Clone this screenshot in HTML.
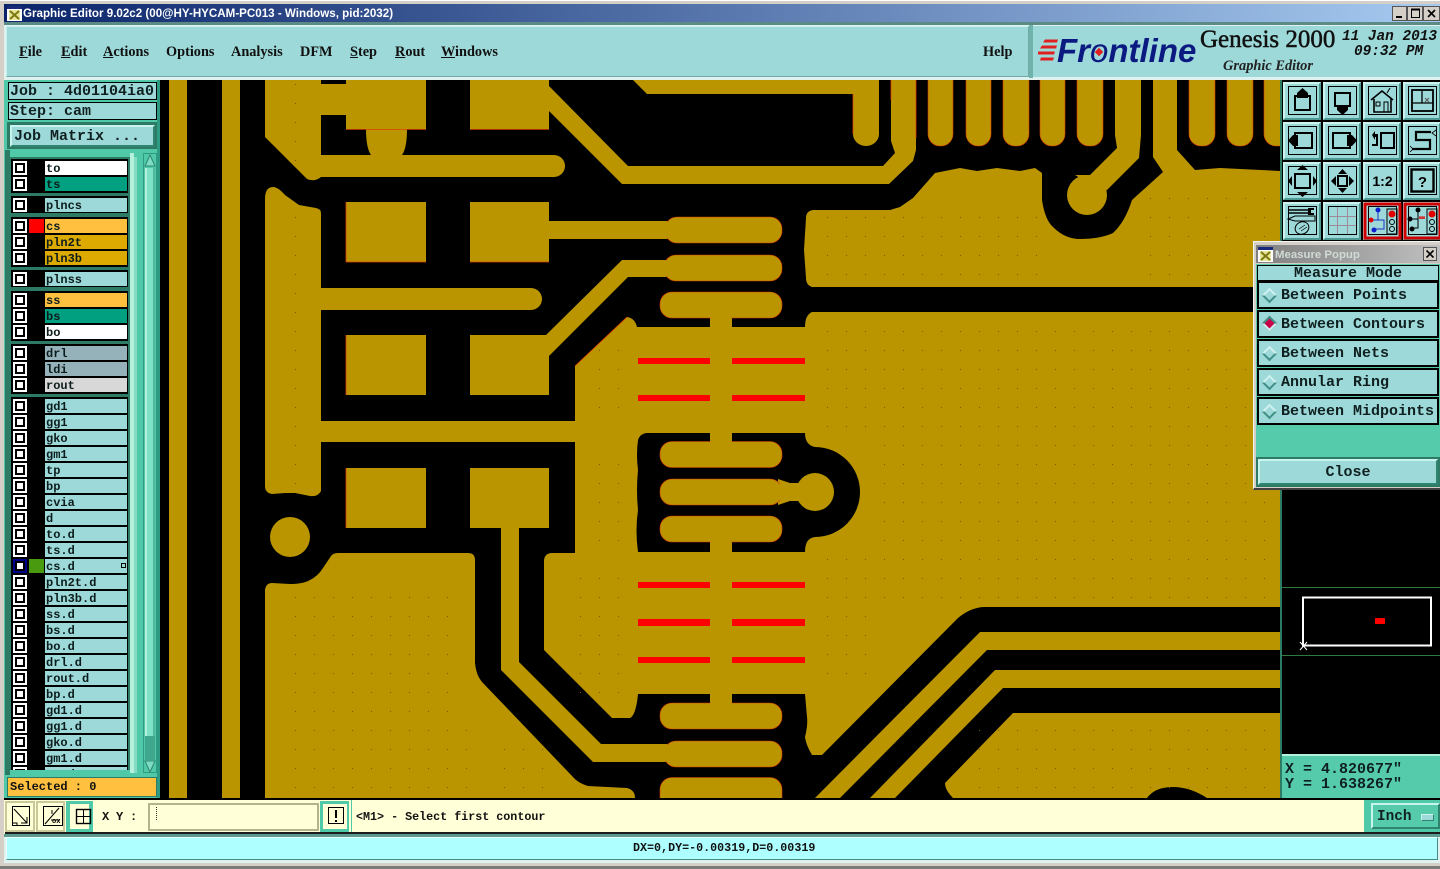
<!DOCTYPE html>
<html><head><meta charset="utf-8"><title>Graphic Editor</title>
<style>
html,body{margin:0;padding:0;background:#d4d0c8;overflow:hidden}
body{position:relative;width:1440px;height:869px;overflow:hidden;font-family:"Liberation Mono",monospace;font-weight:bold;color:#111}
div,span.a{position:absolute;box-sizing:border-box}
.t{white-space:pre}
.m{font:bold 14.3px/1 "Liberation Serif",serif;position:absolute;top:45px;color:#111;white-space:pre}
.g{position:absolute;left:11px;width:117px;background:#000;overflow:hidden}
.r{position:absolute;left:0;width:116px;height:16px}
.r i{position:absolute;left:2px;top:1px;width:14px;height:14px;background:#fff}
.r i:after{content:"";position:absolute;left:2px;top:2px;width:10px;height:10px;border:2px solid #000;background:#fff;box-sizing:border-box}
.r b{position:absolute;left:34px;top:1px;width:81px;height:14px;overflow:hidden;background:#9dd9d9;font:bold 12px/16px "Liberation Mono",monospace;padding-left:1px;white-space:pre;color:#0c1c1c}
.bev{border:2px solid;border-color:#c8f4ee #2f8470 #2f8470 #c8f4ee}
.row{position:absolute;left:1257px;width:182px;background:#9dd9d9;border:2px solid #000;font:bold 15px/26px "Liberation Mono",monospace;padding-left:22px;white-space:pre;color:#102020;overflow:hidden}
.dm{position:absolute;left:1264px;width:11px;height:11px;transform:rotate(45deg);border:2px solid;border-color:#d0f0f0 #3f8f85 #3f8f85 #d0f0f0;background:#9dd9d9}
</style></head><body>

<!-- window frame and title -->
<div style="left:0;top:0;width:1440px;height:869px;background:#d4d0c8"></div>
<div style="left:0;top:0;width:1440px;height:1px;background:#fff"></div>
<div style="left:4px;top:4px;width:1436px;height:18px;background:linear-gradient(90deg,#0a246a,#a6caf0)"></div>
<svg style="position:absolute;left:7px;top:6px" width="15" height="15" viewBox="0 0 15 15"><rect width="15" height="15" fill="#fff"/><rect width="15" height="3" fill="#1a2a7a"/><rect x="2" y="4" width="11" height="10" fill="#e8e49a"/><path d="M3 5L12 13M12 5L3 13" stroke="#7a7a10" stroke-width="2"/></svg>
<div class="t" style="left:23px;top:7px;font:bold 11.6px/14px 'Liberation Sans',sans-serif;color:#fff">Graphic Editor 9.02c2 (00@HY-HYCAM-PC013 - Windows, pid:2032)</div>
<svg style="position:absolute;left:1392px;top:6px" width="48" height="15" viewBox="0 0 48 15">
<g fill="#d4d0c8" stroke="#555" stroke-width="1"><rect x=".5" y=".5" width="14" height="14"/><rect x="15.5" y=".5" width="15" height="14"/><rect x="31.5" y=".5" width="16" height="14"/></g>
<path d="M4 11H10" stroke="#000" stroke-width="2"/><rect x="19.5" y="3.5" width="8" height="8" fill="none" stroke="#000"/><path d="M19 3.5H28" stroke="#000" stroke-width="2"/><path d="M36 4L43 11M43 4L36 11" stroke="#000" stroke-width="1.6"/></svg>

<!-- top bars -->
<div style="left:4px;top:22px;width:1436px;height:3px;background:#5c8a84"></div>
<div style="left:4px;top:25px;width:1436px;height:55px;background:#dff2f0"></div>
<div style="left:6px;top:26px;width:1023px;height:51px;background:#9dd9d9;border:1px solid;border-color:#c9efec #6fa9a8 #6fa9a8 #c9efec"></div>
<div style="left:1029px;top:25px;width:4px;height:53px;background:#6fb3ab"></div>
<div style="left:1033px;top:26px;width:407px;height:51px;background:#9dd9d9"></div>

<span class="m" style="left:19px"><u>F</u>ile</span>
<span class="m" style="left:61px"><u>E</u>dit</span>
<span class="m" style="left:103px"><u>A</u>ctions</span>
<span class="m" style="left:166px">Options</span>
<span class="m" style="left:231px">Analysis</span>
<span class="m" style="left:300px">DFM</span>
<span class="m" style="left:350px"><u>S</u>tep</span>
<span class="m" style="left:395px"><u>R</u>out</span>
<span class="m" style="left:441px"><u>W</u>indows</span>
<span class="m" style="left:983px">Help</span>

<!-- logo -->
<svg style="position:absolute;left:1036px;top:38px" width="24" height="26" viewBox="0 0 24 26"><path d="M9 1.500H22L21 4.500H7ZM6 7.500H21L20 10.500H4ZM2 13.500H19L18 16.500H2ZM5 19.500H18L17 22.500H4Z" fill="#e02020"/></svg>
<div class="t" style="left:1057px;top:33px;font:italic bold 33px/36px 'Liberation Sans',sans-serif;color:#0a1a80">Fr<span style="font-weight:normal">o</span>ntline</div>
<div style="left:1096px;top:49px;width:6px;height:6px;background:#e02020;transform:rotate(45deg)"></div>
<div class="t" style="left:1200px;top:26px;font:normal 25px/28px 'Liberation Serif',serif;-webkit-text-stroke:.5px #111;color:#111">Genesis 2000</div>
<div class="t" style="left:1223px;top:58px;font:italic bold 14.4px/17px 'Liberation Serif',serif;color:#222">Graphic Editor</div>
<div class="t" style="left:1342px;top:29px;font:italic bold 14.4px/16px 'Liberation Mono',monospace;color:#111">11 Jan 2013</div>
<div class="t" style="left:1354px;top:44px;font:italic bold 14.4px/16px 'Liberation Mono',monospace;color:#111">09:32 PM</div>

<!-- main canvas -->
<div style="left:160px;top:80px;width:1121px;height:718px;background:#000"></div>
<svg style="position:absolute;left:169px;top:80px" width="1111" height="718" viewBox="169 80 1111 718">
<defs><pattern id="d" patternUnits="userSpaceOnUse" x="827" y="236" width="19" height="19"><rect width="1" height="1" fill="#7c5c00"/></pattern></defs>
<g fill="#bb9500">
<rect x="169" y="80" width="18" height="718"/><rect x="222" y="80" width="18" height="718"/>
<!-- top-left block -->
<path d="M265 80H321V84H346V80H426V129H407Q407 148 402 155H554A11 11 0 0 1 554 177H321Q316 181 311 180Q308 180 306 178L265 137Z"/>
<!-- left block -->
<path d="M265 199Q265 187 273 187Q278 187 285 195L299 205L316 208Q321 209 321 213V288H531A11 11 0 0 1 531 310H321V491Q318 497 310 496L295 493H285L272 494Q265 493 265 486Z"/>
<circle cx="290" cy="537" r="20"/>
<!-- pads -->
<rect x="470" y="80" width="79" height="49"/>
<rect x="346" y="202" width="80" height="60"/><rect x="470" y="202" width="79" height="60"/>
<rect x="346" y="335" width="80" height="60"/><rect x="470" y="335" width="79" height="60"/>
<rect x="346" y="468" width="80" height="60"/><rect x="470" y="468" width="79" height="60"/>
<!-- main central -->
<path d="M627 317Q635 318 637 327H710V318H732V327H805Q805 315 812 312H1280V607H983Q970 608 958 618L822 755H812Q806 745 805 737Q808 725 807 717L805 694H732V703H710V694H638Q636 715 630 718H612L544 650V560Q545 553 552 553H575V442H321V421H575V366Z"/>
<!-- upper right -->
<path d="M813 210H890L900 207L913 198L935 173L960 168L977 171L997 168L1020 171L1035 168L1042 173V200Q1045 220 1053 227Q1065 239 1080 239Q1100 239 1113 233Q1125 222 1132 200L1163 172L1153 157V80H1177V150L1195 170L1220 168L1280 171V287H812Q806 285 806 278L804 250L806 218Q806 211 813 210Z"/>
</g>
<!-- comb black -->
<path d="M646 433H805Q805 445 815 447A45 45 0 0 1 815 537Q805 538 805 552H638Q635 530 638 510Q636 490 638 470Q636 455 638 440Q640 434 646 433Z" fill="#000"/>
<!-- hole in top-left -->
<path d="M321 115H346V129H366Q366 148 371 155H321Z" fill="#000"/>
<g fill="#bb9500">
<rect x="710" y="433" width="22" height="12"/><rect x="710" y="540" width="22" height="12"/>
<!-- traces -->
<rect x="549" y="221" width="125" height="18"/>
<path d="M622 260H675V277H628L549 356V335H546Z"/>
<path d="M501 528V670L593 762H675V744H601L519 662V528Z"/>
<path d="M633 80L647 94H853V134A13 12 0 0 0 879 134V80Z"/>
<path d="M891 80H916V150L913 161L889 184H622L549 111V86L628 166H883L895 153L891 141Z"/>
<path d="M1115 80V135L1117 148L1090 175H1075L1100 190H1107L1139 158L1141 135V80Z"/>
<circle cx="1087" cy="195" r="20"/>
<path d="M778 479L790 483H802V501H790L778 505Z"/><circle cx="815" cy="492" r="19"/>
<!-- lower-left -->
<path d="M265 590Q266 583 272 583L290 584Q303 584 310 580Q318 576 323 568L331 556Q333 553 338 553H468Q475 553 475 560V663Q476 675 482 682L573 777Q578 783 588 786L627 788Q635 790 635 798H265Z"/>
<!-- diagonals -->
<path d="M815 798L980 632H1280V650H987L840 798Z"/>
<path d="M870 798L995 670H1280V688H1003L895 798Z"/>
<path d="M1013 713H1280V798H1207Q1190 787 1173 787Q1155 787 1147 798H953Q945 790 945 783Z"/>
</g>
<!-- rounded pads with red edge -->
<g fill="#bb9500" stroke="#d83c00" stroke-width=".6">
<rect x="665" y="217" width="117" height="26" rx="12"/><rect x="664" y="255" width="118" height="26" rx="12"/><rect x="660" y="292" width="122" height="26" rx="12"/>
<rect x="660" y="441.500" width="122" height="26" rx="12"/><rect x="660" y="479" width="122" height="26" rx="12"/><rect x="660" y="516" width="122" height="26" rx="12"/>
<rect x="660" y="703" width="122" height="26" rx="12"/><rect x="664" y="741" width="118" height="26" rx="12"/><rect x="660" y="777.500" width="122" height="40" rx="12"/>
</g>
<g fill="#bb9500"><rect x="711" y="316" width="20" height="6"/><rect x="711" y="439" width="20" height="6"/><rect x="711" y="539" width="20" height="6"/><rect x="711" y="700" width="20" height="6"/><rect x="655" y="222" width="20" height="16"/><rect x="655" y="261" width="20" height="15"/><rect x="655" y="745" width="20" height="16"/><rect x="775" y="484" width="12" height="16"/></g>
<!-- fingers -->
<g fill="#bb9500" stroke="#d83c00" stroke-width=".6">
<rect x="928" y="50" width="25" height="96" rx="12"/><rect x="966" y="50" width="25" height="96" rx="12"/><rect x="1003" y="50" width="26" height="96" rx="12"/><rect x="1040" y="50" width="25" height="96" rx="12"/><rect x="1077" y="50" width="26" height="96" rx="12"/><rect x="1189" y="50" width="26" height="96" rx="12"/><rect x="1227" y="50" width="26" height="96" rx="12"/><rect x="1264" y="50" width="40" height="96" rx="12"/>
</g>
<!-- red bars -->
<g fill="#ff0000">
<rect x="638" y="358" width="72" height="6"/><rect x="732" y="358" width="73" height="6"/>
<rect x="638" y="395" width="72" height="6"/><rect x="732" y="395" width="73" height="6"/>
<rect x="638" y="582" width="72" height="6"/><rect x="732" y="582" width="73" height="6"/>
<rect x="638" y="619" width="72" height="7"/><rect x="732" y="619" width="73" height="7"/>
<rect x="638" y="657" width="72" height="6"/><rect x="732" y="657" width="73" height="6"/>
</g>
<!-- red thin edges -->
<path d="M346 129.500H426M470 129.500H549M346 262H426M470 262H549M346 202V262M346 335V395M346 468V528M853 94V134M916 80V138M891 80V100M575 366L627 317" stroke="#e04000" stroke-width=".8" fill="none"/>
<!-- dots -->
<g fill="url(#d)">
<rect x="290" y="80" width="10" height="90"/><rect x="290" y="215" width="10" height="270"/>
<rect x="290" y="595" width="165" height="195"/><rect x="455" y="720" width="30" height="70"/><rect x="500" y="745" width="60" height="45"/>
<rect x="585" y="335" width="50" height="90"/><rect x="585" y="450" width="50" height="100"/><rect x="575" y="560" width="60" height="140"/>
<rect x="820" y="320" width="460" height="110"/><rect x="870" y="440" width="410" height="160"/><rect x="820" y="555" width="60" height="135"/>
<rect x="820" y="217" width="220" height="68"/><rect x="1135" y="180" width="145" height="105"/><rect x="970" y="725" width="310" height="65"/>
</g>
</svg>

<!-- left panel -->
<div style="left:4px;top:80px;width:156px;height:718px;background:#4fc9a8"></div>
<div style="left:5px;top:150px;width:5px;height:625px;background:#2e7b65"></div>
<div style="left:157px;top:80px;width:3px;height:718px;background:#2f9a82"></div>
<div class="t" style="left:8px;top:82px;width:149px;height:18px;background:#9dd9d9;border:1px solid #000;font:bold 15px/18px 'Liberation Mono',monospace;padding-left:1px;color:#102020">Job : 4d01104ia0</div>
<div class="t" style="left:8px;top:102px;width:149px;height:18px;background:#9dd9d9;border:1px solid #000;font:bold 15px/17px 'Liberation Mono',monospace;padding-left:1px;color:#102020">Step: cam</div>
<div style="left:7px;top:122px;width:150px;height:27px;background:#2e7b65"></div>
<div class="t bev" style="left:10px;top:125px;width:145px;height:22px;background:#9dd9d9;font:bold 15px/20px 'Liberation Mono',monospace;padding-left:2px;color:#102020">Job Matrix ...</div>

<!-- scroll -->
<div style="left:130px;top:153px;width:4px;height:620px;background:#b4f0dc"></div>
<div style="left:134px;top:157px;width:3px;height:616px;background:#85dcc4"></div>
<div style="left:143px;top:153px;width:14px;height:620px;background:#4fc9a8;border:1px solid #2f9a82"></div>
<div style="left:145px;top:168px;width:10px;height:568px;background:#7fe0c8;border-left:2px solid #b4f0dc;border-right:2px solid #4fb89c"></div>
<div style="left:145px;top:736px;width:10px;height:24px;background:#3fa78e"></div>
<svg style="position:absolute;left:144px;top:154px" width="12" height="13" viewBox="0 0 12 13"><path d="M6 1L11 12H1Z" fill="#7fdcc4" stroke="#2f8470"/></svg>
<svg style="position:absolute;left:144px;top:760px" width="12" height="13" viewBox="0 0 12 13"><path d="M6 12L11 1H1Z" fill="#7fdcc4" stroke="#2f8470"/></svg>

<!-- layer list -->
<div style="left:10px;top:157px;width:120px;height:613px;background:#2e7b65;overflow:hidden;margin:0">
<div style="left:-10px;top:-157px;width:130px;height:770px">
<div class="g" style="top:159px;height:34px">
 <div class="r" style="top:1px"><i></i><b style="background:#fff">to</b></div>
 <div class="r" style="top:17px"><i></i><b style="background:#00a080">ts</b></div></div>
<div class="g" style="top:196px;height:17px">
 <div class="r" style="top:1px"><i></i><b>plncs</b></div></div>
<div class="g" style="top:217px;height:50px">
 <div style="left:18px;top:2px;width:15px;height:14px;background:#f00"></div>
 <div class="r" style="top:1px"><i></i><b style="background:#ffc040">cs</b></div>
 <div class="r" style="top:17px"><i></i><b style="background:#dcaa00">pln2t</b></div>
 <div class="r" style="top:33px"><i></i><b style="background:#dcaa00">pln3b</b></div></div>
<div class="g" style="top:270px;height:17px">
 <div class="r" style="top:1px"><i></i><b>plnss</b></div></div>
<div class="g" style="top:291px;height:50px">
 <div class="r" style="top:1px"><i></i><b style="background:#ffc040">ss</b></div>
 <div class="r" style="top:17px"><i></i><b style="background:#00a080">bs</b></div>
 <div class="r" style="top:33px"><i></i><b style="background:#fff">bo</b></div></div>
<div class="g" style="top:344px;height:50px">
 <div class="r" style="top:1px"><i></i><b style="background:#95b2ba">drl</b></div>
 <div class="r" style="top:17px"><i></i><b style="background:#95b2ba">ldi</b></div>
 <div class="r" style="top:33px"><i></i><b style="background:#d8d8d8">rout</b></div></div>
<div class="g" style="top:397px;height:373px">
 <div class="r" style="top:1px"><i></i><b>gd1</b></div>
 <div class="r" style="top:17px"><i></i><b>gg1</b></div>
 <div class="r" style="top:33px"><i></i><b>gko</b></div>
 <div class="r" style="top:49px"><i></i><b>gm1</b></div>
 <div class="r" style="top:65px"><i></i><b>tp</b></div>
 <div class="r" style="top:81px"><i></i><b>bp</b></div>
 <div class="r" style="top:97px"><i></i><b>cvia</b></div>
 <div class="r" style="top:113px"><i></i><b>d</b></div>
 <div class="r" style="top:129px"><i></i><b>to.d</b></div>
 <div class="r" style="top:145px"><i></i><b>ts.d</b></div>
 <div style="left:18px;top:162px;width:15px;height:14px;background:#4a9a10"></div>
 <div class="r" style="top:161px"><i style="outline:2px solid #00008a;outline-offset:-2px"></i><b>cs.d</b></div>
 <div style="left:110px;top:166px;width:5px;height:5px;border:1px solid #000;background:#9dd9d9"></div>
 <div class="r" style="top:177px"><i></i><b>pln2t.d</b></div>
 <div class="r" style="top:193px"><i></i><b>pln3b.d</b></div>
 <div class="r" style="top:209px"><i></i><b>ss.d</b></div>
 <div class="r" style="top:225px"><i></i><b>bs.d</b></div>
 <div class="r" style="top:241px"><i></i><b>bo.d</b></div>
 <div class="r" style="top:257px"><i></i><b>drl.d</b></div>
 <div class="r" style="top:273px"><i></i><b>rout.d</b></div>
 <div class="r" style="top:289px"><i></i><b>bp.d</b></div>
 <div class="r" style="top:305px"><i></i><b>gd1.d</b></div>
 <div class="r" style="top:321px"><i></i><b>gg1.d</b></div>
 <div class="r" style="top:337px"><i></i><b>gko.d</b></div>
 <div class="r" style="top:353px"><i></i><b>gm1.d</b></div>
 <div class="r" style="top:369px;height:4px;overflow:hidden"><i></i><b>tp.d</b></div>
</div>
</div></div>

<div class="t" style="left:7px;top:777px;width:150px;height:20px;background:#ffc040;border:1px solid #2e7b65;font:bold 12px/18px 'Liberation Mono',monospace;padding-left:2px;color:#111">Selected : 0</div>

<!-- right column -->
<div style="left:1280px;top:80px;width:160px;height:718px;background:#000"></div>
<div style="left:1280px;top:80px;width:2px;height:718px;background:#2e7b65"></div>
<svg style="position:absolute;left:1282px;top:80px" width="158" height="160" viewBox="1282 80 158 160">
<defs>
<g id="b"><rect width="38" height="38" fill="#9dd9d9"/><path d="M0 38V0H38L36 2H2V36Z" fill="#cdf3ef"/><path d="M38 0V38H0L2 36H36V2Z" fill="#4e9a92"/><rect x="5.500" y="4.500" width="28" height="28" fill="none" stroke="#000"/></g>
</defs>
<!-- row 1 -->
<g transform="translate(1283,82)"><use href="#b"/><rect x="12" y="14" width="15" height="14" fill="none" stroke="#000" stroke-width="2"/><path d="M19.500 6L25 11V16H14V11Z" fill="#000"/></g>
<g transform="translate(1323,82)"><use href="#b"/><path d="M12 11H27V24H12Z" fill="none" stroke="#000" stroke-width="2"/><path d="M14 23H25V28L19.500 33L14 28Z" fill="#000"/></g>
<g transform="translate(1363,82)"><use href="#b"/><path d="M8 18L19 9L30 18M11 17V30H28V17" fill="none" stroke="#000" stroke-width="1.600"/><rect x="21" y="20" width="4" height="10" fill="none" stroke="#000"/><rect x="13" y="20" width="4" height="4" fill="none" stroke="#000"/><path d="M24 11L27 6" stroke="#000"/></g>
<g transform="translate(1403,82)"><use href="#b"/><rect x="9" y="8" width="21" height="21" fill="none" stroke="#000" stroke-width="1.800"/><path d="M19 8V21M9 21H30" stroke="#000" stroke-width="1.300"/><path d="M22 16L26 20M26 16L22 20" stroke="#555"/></g>
<!-- row 2 -->
<g transform="translate(1283,122)"><use href="#b"/><rect x="12" y="11" width="17" height="15" fill="none" stroke="#000" stroke-width="2"/><path d="M5 18.500L10 13H15V24H10Z" fill="#000"/></g>
<g transform="translate(1323,122)"><use href="#b"/><rect x="10" y="11" width="17" height="15" fill="none" stroke="#000" stroke-width="2"/><path d="M34 18.500L29 13H24V24H29Z" fill="#000"/></g>
<g transform="translate(1363,122)"><use href="#b"/><rect x="18" y="11" width="13" height="15" fill="none" stroke="#000" stroke-width="2"/><path d="M9 13L12 9V12H15V24H9V22H13V15H12V18Z" fill="#000"/></g>
<g transform="translate(1403,122)"><use href="#b"/><path d="M28 10H13V18H27V27H9" fill="none" stroke="#000" stroke-width="2.200"/><path d="M33 8L29 11L33 14M7 24L10 27L7 30" fill="none" stroke="#000" stroke-width=".8"/></g>
<!-- row 3 -->
<g transform="translate(1283,162)"><use href="#b"/><rect x="12" y="12" width="15" height="14" fill="none" stroke="#000" stroke-width="2"/><path d="M19.500 3L25 8H14ZM19.500 35L25 30H14ZM5 19L9 14V24ZM34 19L30 14V24Z" fill="#000"/></g>
<g transform="translate(1323,162)"><use href="#b"/><rect x="15" y="14" width="9" height="10" fill="none" stroke="#000" stroke-width="2"/><path d="M19.500 7L24 12H15ZM19.500 31L24 26H15ZM8 19L13 14V24ZM31 19L26 14V24Z" fill="#000"/></g>
<g transform="translate(1363,162)"><use href="#b"/><text x="19.500" y="24" text-anchor="middle" font-family="Liberation Sans" font-weight="bold" font-size="14" fill="#000">1:2</text></g>
<g transform="translate(1403,162)"><use href="#b"/><rect x="8.500" y="7.500" width="22" height="22" fill="none" stroke="#000" stroke-width="2.400"/><text x="19.500" y="25" text-anchor="middle" font-family="Liberation Sans" font-weight="bold" font-size="15" fill="#000">?</text></g>
<!-- row 4 -->
<g transform="translate(1283,202)"><use href="#b"/><path d="M5 8H25M5 11H25" stroke="#000" stroke-width="1.500"/><path d="M25 6H31V8H28V11H31V13H25Z" fill="#000"/><path d="M5 17L12 14H32V19H12Z" fill="none" stroke="#000"/><ellipse cx="19" cy="26" rx="7" ry="6" fill="none" stroke="#000" transform="rotate(-25 19 26)"/><path d="M16 27L22 23M18 29L24 25" stroke="#000" stroke-width=".7"/></g>
<g transform="translate(1323,202)"><use href="#b"/><path d="M14.500 5V32M24.500 5V32M6 14.500H33M6 23.500H33" stroke="#a08a9a" stroke-width="1"/></g>
<g transform="translate(1363,202)"><use href="#b"/><rect x="2" y="2" width="35" height="34" fill="none" stroke="#d00000" stroke-width="3"/><rect x="24" y="7" width="10" height="25" fill="none" stroke="#000"/><circle cx="29" cy="12" r="3.500" fill="#e00000"/><circle cx="29" cy="20" r="2.500" fill="none" stroke="#000"/><circle cx="29" cy="27" r="2.500" fill="none" stroke="#000"/><path d="M15 8V18H8M15 18H21V27H12" fill="none" stroke="#2030c0"/><circle cx="15" cy="8" r="2.500" fill="#1020d0"/><circle cx="11" cy="28" r="2.500" fill="#1020d0"/><circle cx="8" cy="18" r="2.500" fill="#e00000"/></g>
<g transform="translate(1403,202)"><use href="#b"/><rect x="2" y="2" width="35" height="34" fill="none" stroke="#d00000" stroke-width="3"/><rect x="24" y="7" width="10" height="25" fill="none" stroke="#000"/><circle cx="29" cy="12" r="3.500" fill="#e00000"/><circle cx="29" cy="20" r="2.500" fill="none" stroke="#000"/><circle cx="29" cy="27" r="2.500" fill="none" stroke="#000"/><path d="M15 8V26H10M15 17H8" fill="none" stroke="#000"/><circle cx="15" cy="8" r="2.500" fill="#000"/><circle cx="9" cy="27" r="2.500" fill="#000"/><circle cx="7" cy="17" r="2.500" fill="#000"/><path d="M16 16H22M17 14V17M19 14V17M21 14V17" stroke="#e00000"/></g>
</svg>

<!-- thumbnail -->
<svg style="position:absolute;left:1282px;top:580px" width="158" height="80" viewBox="1282 580 158 80">
<path d="M1282 587.500H1440M1282 655.500H1440" stroke="#2e7a3a" stroke-width="1"/>
<rect x="1303" y="597.500" width="128" height="48" fill="none" stroke="#fff" stroke-width="2"/>
<rect x="1375" y="618" width="10" height="6" fill="#f00"/>
<path d="M1300 642L1307 650M1307 642L1300 650" stroke="#fff"/>
</svg>

<!-- coords -->
<div style="left:1282px;top:754px;width:158px;height:44px;background:#55cbac;border-top:2px solid #b4f0dc"></div>
<div class="t" style="left:1285px;top:762px;font:bold 15px/15px 'Liberation Mono',monospace;color:#102020">X = 4.820677"</div>
<div class="t" style="left:1285px;top:777px;font:bold 15px/15px 'Liberation Mono',monospace;color:#102020">Y = 1.638267"</div>

<!-- measure popup -->
<div style="left:1253px;top:241px;width:187px;height:249px;background:#d4d0c8;border:1px solid #f4f4f0;border-right:0;border-bottom:2px solid #404040"></div>
<div style="left:1256px;top:245px;width:184px;height:18px;background:linear-gradient(90deg,#808080,#c0c0c0)"></div>
<svg style="position:absolute;left:1258px;top:247px" width="15" height="15" viewBox="0 0 15 15"><rect width="15" height="15" fill="#fff"/><rect width="15" height="3" fill="#1a2a7a"/><rect x="2" y="4" width="11" height="10" fill="#e8e49a"/><path d="M3 5L12 13M12 5L3 13" stroke="#7a7a10" stroke-width="2"/></svg>
<div class="t" style="left:1275px;top:248px;font:bold 11.4px/14px 'Liberation Sans',sans-serif;color:#cfdcd4">Measure Popup</div>
<svg style="position:absolute;left:1423px;top:247px" width="14" height="14" viewBox="0 0 14 14"><rect x=".5" y=".5" width="13" height="13" fill="#d4d0c8" stroke="#555"/><path d="M3.500 3.500L10.500 10.500M10.500 3.500L3.500 10.500" stroke="#000" stroke-width="1.600"/></svg>
<div style="left:1256px;top:264px;width:184px;height:223px;background:#55cbac"></div>
<div class="t" style="left:1257px;top:265px;width:182px;height:16px;background:#9dd9d9;border:1px solid #000;font:bold 15px/16px 'Liberation Mono',monospace;text-align:center;color:#102020;overflow:hidden">Measure Mode</div>
<div class="row" style="top:281px;height:28px">Between Points</div>
<div class="row" style="top:310px;height:28px">Between Contours</div>
<div class="row" style="top:339px;height:28px">Between Nets</div>
<div class="row" style="top:368px;height:28px">Annular Ring</div>
<div class="row" style="top:397px;height:28px">Between Midpoints</div>
<div class="dm" style="top:290px"></div>
<div class="dm" style="top:318px;background:#c8004a;border-color:#3f8f85 #d0f0f0 #d0f0f0 #3f8f85"></div>
<div class="dm" style="top:348px"></div>
<div class="dm" style="top:377px"></div>
<div class="dm" style="top:406px"></div>
<div style="left:1256px;top:457px;width:184px;height:30px;background:#2e7b65"></div>
<div class="t bev" style="left:1258px;top:459px;width:180px;height:26px;background:#9dd9d9;font:bold 15px/24px 'Liberation Mono',monospace;text-align:center;color:#102020">Close</div>

<!-- bottom bar -->
<div style="left:4px;top:798px;width:1436px;height:2px;background:#000"></div>
<div style="left:4px;top:800px;width:1436px;height:34px;background:#ffffd8"></div>
<div style="left:5px;top:832px;width:1435px;height:2px;background:#1c1c1c"></div>
<div style="left:5px;top:801px;width:30px;height:31px;background:#ffffd8;border:2px solid #c8c89a"></div>
<div style="left:36px;top:801px;width:29px;height:31px;background:#ffffd8;border:2px solid #c8c89a"></div>
<div style="left:66px;top:801px;width:27px;height:31px;background:#4fc9a8"></div>
<div style="left:70px;top:804px;width:19px;height:25px;background:#ffffd8"></div>
<svg style="position:absolute;left:5px;top:801px" width="90" height="31" viewBox="5 801 90 31">
<rect x="12.500" y="806.500" width="17" height="19" fill="none" stroke="#000"/><path d="M14 809L27 823M27 817V823H21" fill="none" stroke="#000"/><path d="M12 823H17V826" stroke="#000" fill="none"/>
<rect x="43.500" y="806.500" width="19" height="19" fill="none" stroke="#000"/><path d="M45 824L59 808" stroke="#000"/><path d="M51 820H60M52 810V814" stroke="#000"/><text x="52" y="823" font-size="7" font-family="Liberation Mono" fill="#000">ox</text>
<rect x="77.500" y="809.500" width="14" height="14" fill="none" stroke="#000" stroke-width="1.400" transform="translate(-1,0)"/><path d="M83.500 809V824M76 816.500H91" stroke="#000"/>
</svg>
<div class="t" style="left:102px;top:810px;font:bold 12px/14px 'Liberation Mono',monospace;letter-spacing:-.2px;color:#111">X Y :</div>
<div style="left:148px;top:803px;width:171px;height:28px;background:#ffffd8;border:2px solid #b4b48c"></div>
<div style="left:156px;top:807px;width:1px;height:13px;border-left:1px dotted #333"></div>
<div style="left:320px;top:801px;width:29px;height:31px;background:#4fc9a8"></div>
<div style="left:323px;top:804px;width:24px;height:25px;background:#ffffd8"></div>
<div style="left:328px;top:807px;width:16px;height:17px;border:1px solid #000"></div>
<div style="left:335px;top:810px;width:2px;height:8px;background:#000"></div>
<div style="left:335px;top:820px;width:2px;height:2px;background:#000"></div>
<div style="left:351px;top:800px;width:1px;height:32px;background:#4fc9a8"></div>
<div class="t" style="left:356px;top:810px;font:bold 11.7px/14px 'Liberation Mono',monospace;color:#111">&lt;M1&gt; - Select first contour</div>
<div style="left:1364px;top:800px;width:76px;height:32px;background:#4fc9a8"></div>
<div class="t bev" style="left:1371px;top:803px;width:69px;height:26px;background:#55cbac;font:bold 14.4px/25px 'Liberation Mono',monospace;padding-left:4px;color:#102020;overflow:hidden">Inch</div>
<div class="bev" style="left:1421px;top:814px;width:13px;height:7px;background:#9dd9d9;border-width:1px"></div>

<!-- status -->
<div style="left:4px;top:834px;width:1436px;height:3px;background:#5c9a90"></div>
<div style="left:4px;top:837px;width:1436px;height:26px;background:#dff2f0"></div>
<div style="left:6px;top:837px;width:1432px;height:23px;background:#aeffff;border:1px solid;border-color:#e8ffff #4a8a86 #4a8a86 #e8ffff"></div>
<div class="t" style="left:633px;top:841px;font:bold 11.7px/14px 'Liberation Mono',monospace;color:#111">DX=0,DY=-0.00319,D=0.00319</div>
<div style="left:0;top:863px;width:1440px;height:3px;background:#d4d0c8"></div>
<div style="left:0;top:866px;width:1440px;height:3px;background:#7c7c78"></div>
</body></html>
